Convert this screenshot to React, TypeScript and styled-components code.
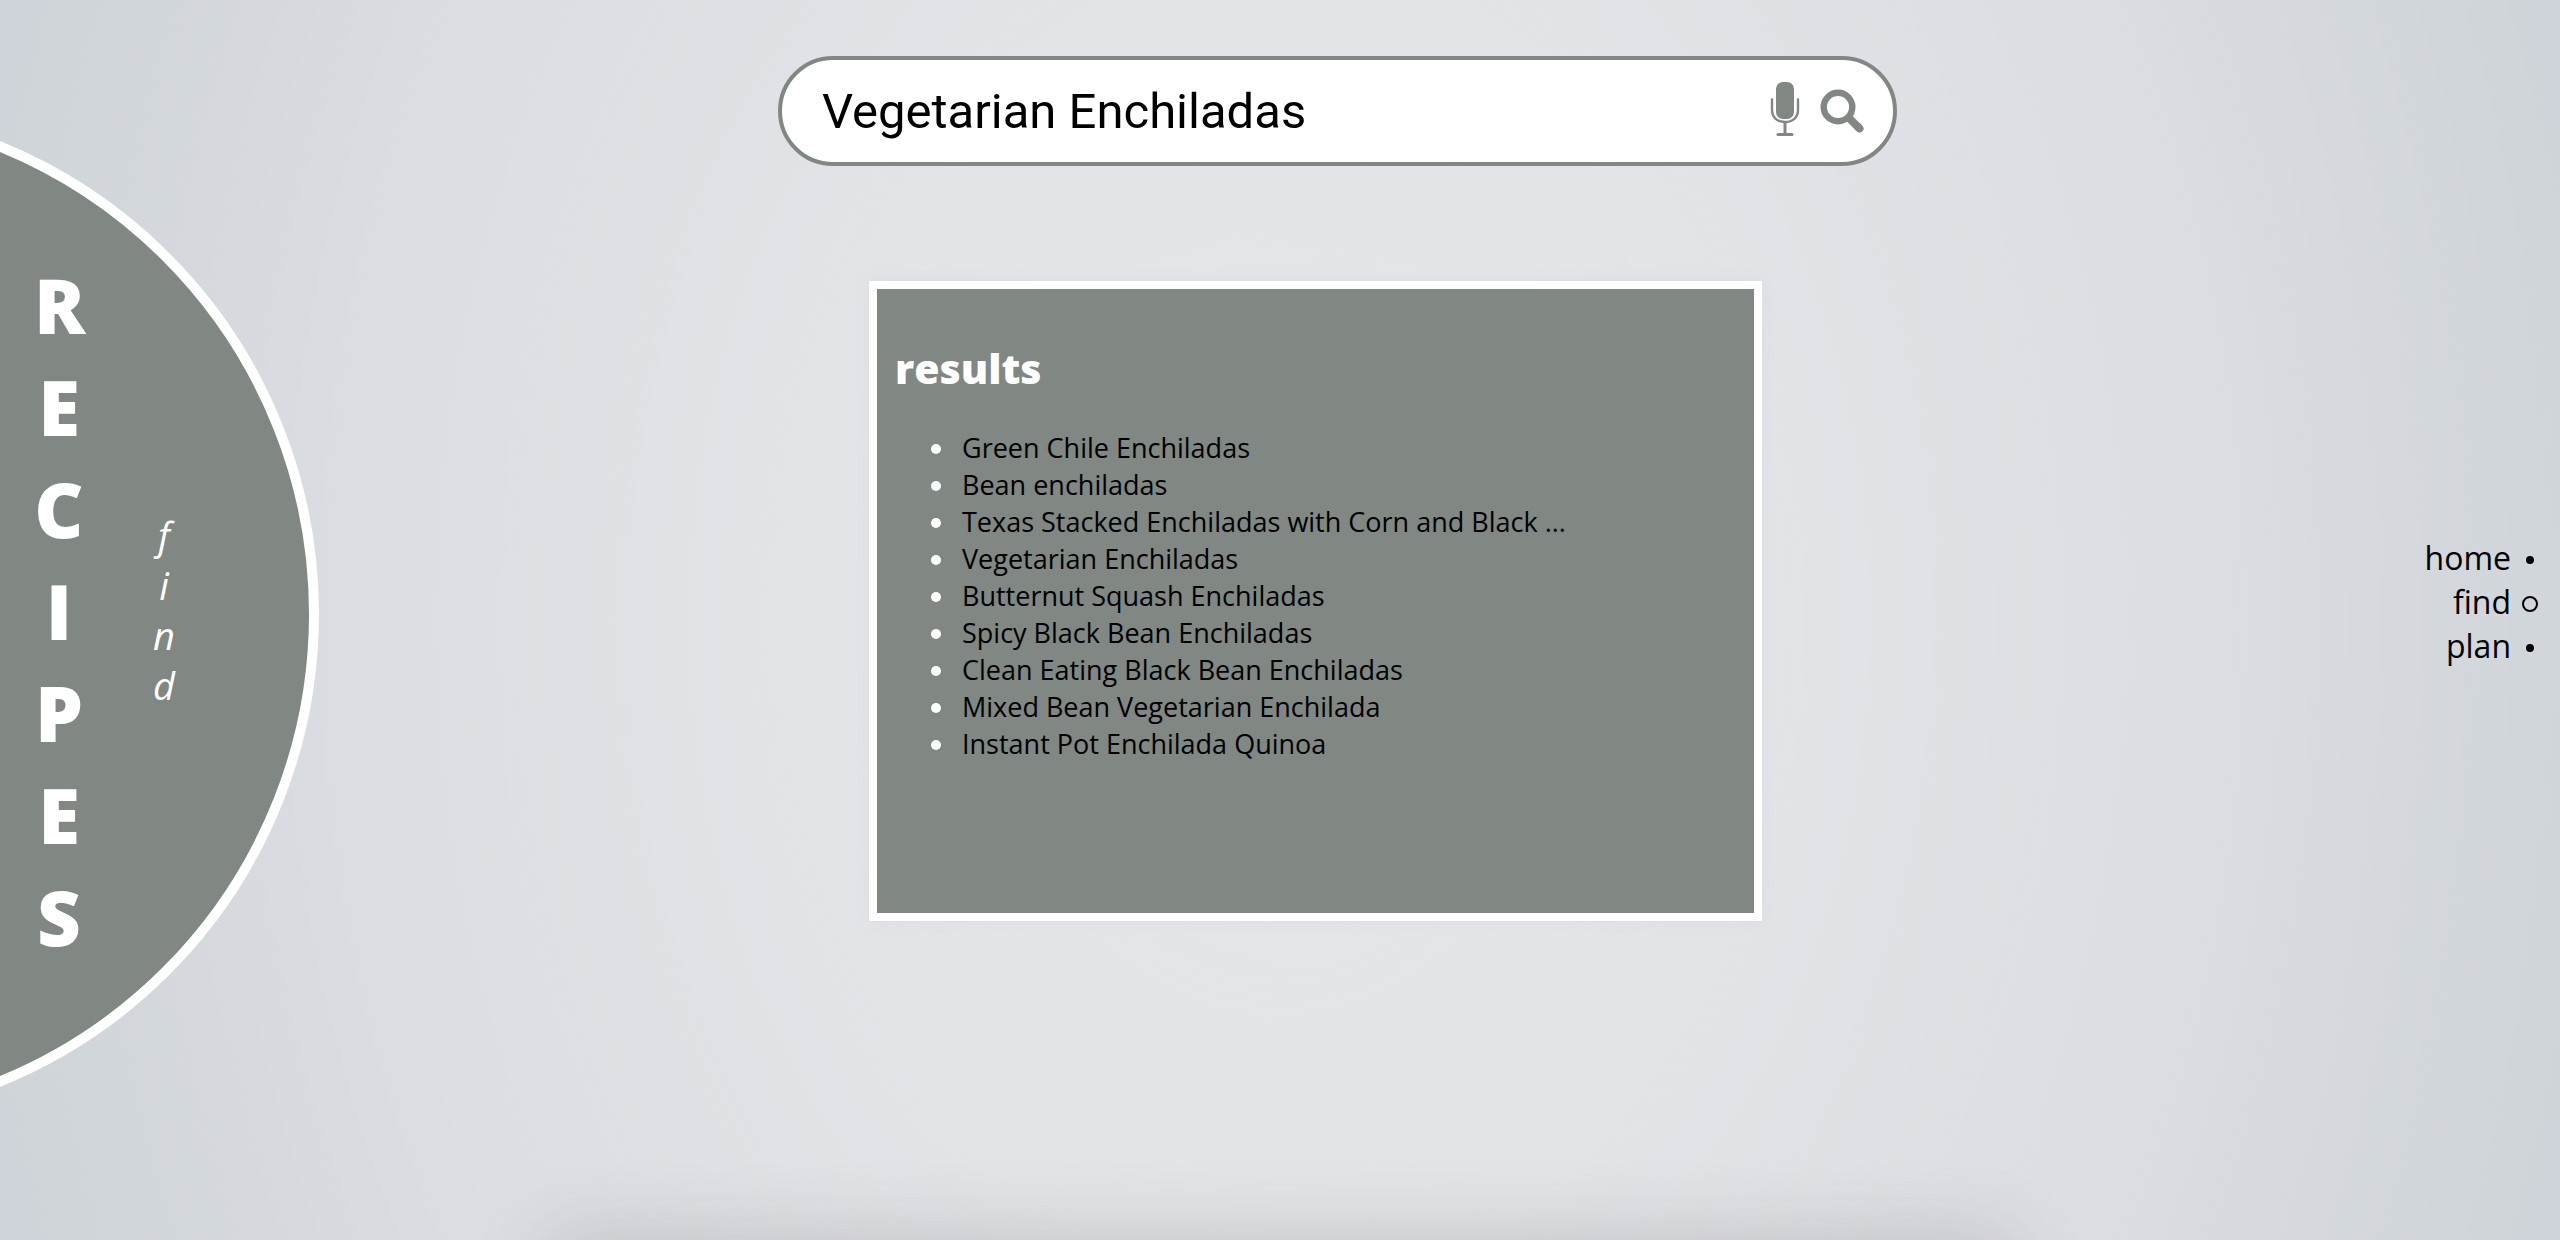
import React, { useState } from "react";
import styled, { createGlobalStyle } from "styled-components";

const slate = "#818783";

const GlobalStyle = createGlobalStyle`
  *, *::before, *::after { box-sizing: border-box; }
  body {
    margin: 0;
    font-family: "Open Sans", "Noto Sans", sans-serif;
    color: #000;
  }
`;

const Page = styled.div`
  display: flex;
  flex-direction: column;
  height: 100vh;
  overflow: hidden;
  background: radial-gradient(ellipse 55% 150% at 50% 50%, #e6e7eb 0%, #e3e4e8 35%, #dddee3 62%, #dadde1 67%, #d0d5d9 92%, #ced3db 97%);
`;

const Content = styled.div`
  flex: 1;
  min-height: 0;
  display: flex;
`;

const Sidebar = styled.header`
  flex: none;
  width: 320px;
  padding-top: 104px;
`;

const Disc = styled.div`
  display: flex;
  align-items: center;
  gap: 68px;
  width: 1020px;
  height: 1020px;
  margin-left: -701px;
  padding: 0 0 6px 725px;
  border: 10px solid #fff;
  border-radius: 50%;
  background: ${slate};
  color: #fff;
`;

const Title = styled.h1`
  width: 50px;
  margin: 0;
  font-size: 76px;
  font-weight: 800;
  line-height: 102px;
  text-align: center;
`;

const Subtitle = styled.p`
  width: 24px;
  margin: 0;
  padding-bottom: 2px;
  font-size: 38px;
  font-style: italic;
  line-height: 50px;
  text-align: center;
`;

const Letter = styled.span`
  display: block;
`;

const Main = styled.main`
  flex: 1;
  min-width: 0;
  display: flex;
  flex-direction: column;
  align-items: center;
  gap: 115px;
  padding-top: 56px;
`;

const SearchForm = styled.form`
  display: flex;
  align-items: center;
  gap: 20px;
  width: 55%;
  height: 110px;
  padding: 0 29px 0 40px;
  border: 4px solid ${slate};
  border-radius: 55px;
  background: #fff;
`;

const SearchInput = styled.input`
  flex: 1;
  min-width: 0;
  padding: 2px 0 0;
  border: 0;
  outline: 0;
  background: transparent;
  color: #000;
  font-family: Roboto, "Liberation Sans", sans-serif;
  font-size: 49px;
  line-height: 60px;
`;

const IconButton = styled.button`
  display: flex;
  padding: 0;
  border: 0;
  background: none;
  color: ${slate};
  cursor: pointer;
`;

const Results = styled.section`
  width: 44%;
  max-width: 893px;
  min-height: 640px;
  margin-right: 44px;
  padding: 51px 18px;
  border: 8px solid #fff;
  background: ${slate};
  color: #fff;
  box-shadow: 0 0 16px rgba(120, 125, 160, 0.06);
`;

const ResultsTitle = styled.h2`
  margin: 0 0 33px;
  font-size: 41px;
  font-weight: 800;
  line-height: 56px;
`;

const ResultList = styled.ul`
  margin: 0;
  padding: 0 0 0 36px;
  list-style: none;
  font-size: 27px;
  line-height: 37px;
`;

const ResultItem = styled.li`
  display: flex;
  align-items: center;
  gap: 21px;

  &::before {
    content: "";
    flex: none;
    width: 10px;
    height: 10px;
    margin-top: 3px;
    border-radius: 50%;
    background: #fff;
  }
`;

const ResultLink = styled.a`
  color: #000;
  text-decoration: none;
`;

const SideNav = styled.nav`
  flex: none;
  display: flex;
  align-items: center;
  justify-content: flex-end;
  width: 205px;
  padding: 0 22px 36px 0;
`;

const NavList = styled.ul`
  margin: 0;
  padding: 0;
  list-style: none;
`;

const NavLink = styled.a`
  display: flex;
  align-items: center;
  justify-content: flex-end;
  gap: 11px;
  color: #000;
  font-size: 32px;
  line-height: 44px;
  text-decoration: none;
`;

const Dot = styled.span<{ $active: boolean }>`
  width: ${(p) => (p.$active ? 16 : 8)}px;
  height: ${(p) => (p.$active ? 16 : 8)}px;
  margin: 4px ${(p) => (p.$active ? 0 : 4)}px 0;
  border: 2px solid #000;
  border-radius: 50%;
  background: ${(p) => (p.$active ? "transparent" : "#000")};
`;

const NextPanel = styled.div`
  flex: none;
  align-self: center;
  width: 57%;
  height: 200px;
  margin-bottom: -200px;
  box-shadow: 0 0 80px rgba(60, 60, 60, 0.2);
`;

const MicIcon = () => (
  <svg width="30" height="58" viewBox="0 0 30 58" fill="none" aria-hidden="true">
    <rect x="6" y="0" width="18" height="37" rx="7" fill="currentColor" />
    <path d="M2 17.500V28c0 7.500 5.500 12 13 12s13-4.500 13-12V17.500" stroke="currentColor" strokeWidth="2.400" strokeLinecap="round" />
    <path d="M15 40v12" stroke="currentColor" strokeWidth="3" />
    <path d="M8 52.500h14" stroke="currentColor" strokeWidth="3" strokeLinecap="round" />
  </svg>
);

const SearchIcon = () => (
  <svg width="44" height="44" viewBox="0 0 44 44" fill="none" aria-hidden="true">
    <circle cx="18" cy="18" r="14.300" stroke="currentColor" strokeWidth="6.400" />
    <path d="M28 28l11 11" stroke="currentColor" strokeWidth="8" />
    <path d="M38.500 38.500l1 1" stroke="currentColor" strokeWidth="8" strokeLinecap="round" />
  </svg>
);

const recipes = [
  "Green Chile Enchiladas",
  "Bean enchiladas",
  "Texas Stacked Enchiladas with Corn and Black ...",
  "Vegetarian Enchiladas",
  "Butternut Squash Enchiladas",
  "Spicy Black Bean Enchiladas",
  "Clean Eating Black Bean Enchiladas",
  "Mixed Bean Vegetarian Enchilada",
  "Instant Pot Enchilada Quinoa",
];

const sections = ["home", "find", "plan"];

const stack = (word: string) =>
  word.split("").map((char, i) => <Letter key={i}>{char}</Letter>);

export default function App() {
  const [query, setQuery] = useState("Vegetarian Enchiladas");

  return (
    <Page>
      <GlobalStyle />
      <Content>
        <Sidebar>
          <Disc>
            <Title>{stack("RECIPES")}</Title>
            <Subtitle>{stack("find")}</Subtitle>
          </Disc>
        </Sidebar>
        <Main>
          <SearchForm role="search" onSubmit={(e) => e.preventDefault()}>
            <SearchInput
              type="text"
              aria-label="Search recipes"
              value={query}
              onChange={(e) => setQuery(e.target.value)}
            />
            <IconButton type="button" aria-label="Search by voice">
              <MicIcon />
            </IconButton>
            <IconButton type="submit" aria-label="Search">
              <SearchIcon />
            </IconButton>
          </SearchForm>
          <Results>
            <ResultsTitle>results</ResultsTitle>
            <ResultList>
              {recipes.map((name) => (
                <ResultItem key={name}>
                  <ResultLink href="#recipe">{name}</ResultLink>
                </ResultItem>
              ))}
            </ResultList>
          </Results>
        </Main>
        <SideNav aria-label="Sections">
          <NavList>
            {sections.map((name) => (
              <li key={name}>
                <NavLink href={`#${name}`}>
                  {name}
                  <Dot $active={name === "find"} />
                </NavLink>
              </li>
            ))}
          </NavList>
        </SideNav>
      </Content>
      <NextPanel />
    </Page>
  );
}
